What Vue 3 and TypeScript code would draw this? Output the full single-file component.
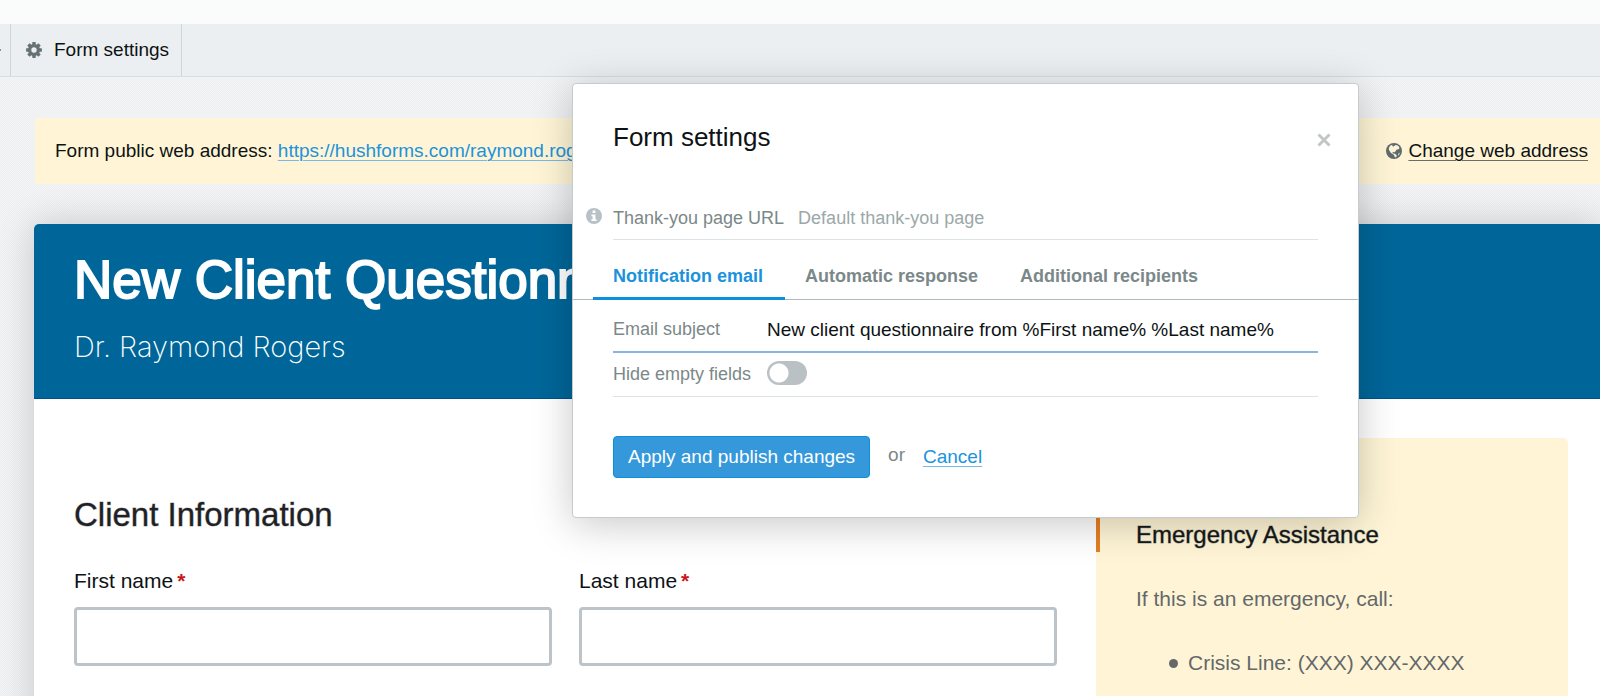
<script setup lang="ts">
import { ref } from 'vue'

interface Tab {
  id: string
  label: string
}

const tabs: Tab[] = [
  { id: 'notification', label: 'Notification email' },
  { id: 'automatic', label: 'Automatic response' },
  { id: 'recipients', label: 'Additional recipients' },
]

const activeTab = ref('notification')
const thankYouUrl = ref('')
const subject = ref('New client questionnaire from %First name% %Last name%')
const hideEmpty = ref(false)
const firstName = ref('')
const lastName = ref('')
const gearTeeth: number[] = [0, 45, 90, 135, 180, 225, 270, 315]
</script>

<template>
  <div class="page">
    <div class="top-strip"></div>
    <nav class="toolbar" aria-label="Form tools">
      <div class="toolbar-prev"><span class="dash"></span></div>
      <button type="button" class="toolbar-item">
        <svg class="gear" viewBox="0 0 16 16" aria-hidden="true">
          <circle cx="8" cy="8" r="4.4" fill="none" stroke="#667274" stroke-width="3.4" />
          <rect v-for="a in gearTeeth" :key="a" x="6.3" y="0.1" width="3.4" height="3.2" rx="0.5"
            fill="#667274" :transform="`rotate(${a} 8 8)`" />
        </svg>
        <span>Form settings</span>
      </button>
    </nav>

    <main class="content">
      <section class="banner">
        <p class="address">
          Form public web address:
          <a href="#form" class="link">https://hushforms.com/raymond.rogers</a>
        </p>
        <div class="change">
          <svg class="globe" viewBox="0 0 16 16" aria-hidden="true">
            <circle cx="8" cy="8" r="8" fill="#5f6b6e" />
            <path fill="#fff5d6" d="M3 4.4 4.4 2.6 6.4 1.8 6.2 3 7.6 3.6 9.6 2 11.6 2.4 13 3.8 13.4 5.4 12 6.6 10.6 6.6 9.6 8.2 8.2 9.4 7.2 8.8 6.4 9.4 7.2 10.4 8.8 10.8 10.6 12 10.6 13.4 9.6 14.4 8.6 13.8 8.2 12.2 6.8 11 5 10 3.6 8 2.8 6.4Z" />
            <path fill="#fff5d6" d="M12.4 10.8 13.8 9.4 13.2 11.8 12 12.6Z" />
          </svg>
          <a href="#change" class="link dark">Change web address</a>
        </div>
      </section>

      <article class="card">
        <header class="card-head">
          <h1>New Client Questionnaire</h1>
          <p>Dr. Raymond Rogers</p>
        </header>
        <div class="card-body">
          <form class="client" @submit.prevent>
            <h2>Client Information</h2>
            <div class="names">
              <div class="field">
                <label for="first">First name<span class="req">*</span></label>
                <input id="first" v-model="firstName" type="text" />
              </div>
              <div class="field">
                <label for="last">Last name<span class="req">*</span></label>
                <input id="last" v-model="lastName" type="text" />
              </div>
            </div>
          </form>
          <aside class="aside">
            <h3>Emergency Assistance</h3>
            <p>If this is an emergency, call:</p>
            <ul>
              <li>Crisis Line: (XXX) XXX-XXXX</li>
            </ul>
          </aside>
        </div>
      </article>
    </main>

    <section class="modal" role="dialog" aria-labelledby="dialog-title">
      <div class="modal-head">
        <h2 id="dialog-title">Form settings</h2>
        <button type="button" class="close" aria-label="Close">
          <svg viewBox="0 0 14 14" aria-hidden="true">
            <path d="M1.5 1.5 12.5 12.5M12.5 1.5 1.5 12.5" stroke="#c3c5c6" stroke-width="3" />
          </svg>
        </button>
      </div>

      <div class="row thanks">
        <svg class="info" viewBox="0 0 16 16" aria-hidden="true">
          <circle cx="8" cy="8" r="8" fill="#b9c1c6" />
          <path fill="#fff" d="M6.6 2.6h2.8v2.4H6.6zM5.4 6.4h4v4.8h1.2v1.8H5.4v-1.8h1.2V8.2H5.4z" />
        </svg>
        <label for="thanks">Thank-you page URL</label>
        <input id="thanks" v-model="thankYouUrl" type="text" placeholder="Default thank-you page" />
      </div>

      <div class="tabs" role="tablist">
        <button v-for="t in tabs" :key="t.id" type="button" role="tab" class="tab"
          :class="{ active: t.id === activeTab }" :aria-selected="t.id === activeTab"
          @click="activeTab = t.id">{{ t.label }}</button>
      </div>

      <div class="row subject">
        <label for="subject" class="fixed">Email subject</label>
        <input id="subject" v-model="subject" type="text" />
      </div>
      <div class="row hide">
        <label for="hide" class="fixed">Hide empty fields</label>
        <input id="hide" v-model="hideEmpty" type="checkbox" class="switch" />
      </div>

      <div class="actions">
        <button type="button" class="apply">Apply and publish changes</button>
        <span class="or">or</span>
        <a href="#cancel" class="link">Cancel</a>
      </div>
    </section>
  </div>
</template>

<style>
body {
  margin: 0;
  background: #eff1f3;
}
</style>

<style scoped>
.page {
  position: relative;
  height: 100vh;
  overflow: hidden;
  box-sizing: border-box;
  font-family: "Liberation Sans", Arial, sans-serif;
  font-size: 19px;
  color: #0d1214;
  background: repeating-conic-gradient(#edeff1 0 25%, #f2f4f5 0 50%) 0 0 / 2px 2px;
}
h1, h2, h3, p, ul {
  margin: 0;
  padding: 0;
  font-weight: 400;
}
button, input {
  font: inherit;
  color: inherit;
}
.top-strip {
  height: 24px;
  background: #fafcfc;
}
.toolbar {
  display: flex;
  height: 52px;
  background: #ebeff1;
  border-bottom: 1px solid #d9dddf;
}
.toolbar-prev {
  display: flex;
  align-items: center;
  width: 10px;
  border-right: 1px solid #cfd5d8;
}
.dash {
  width: 1px;
  height: 2px;
  background: #8b9598;
}
.toolbar-item {
  display: flex;
  align-items: center;
  gap: 12px;
  padding: 0 12px 0 15px;
  border: 0;
  border-right: 1px solid #cfd5d8;
  background: none;
}
.gear {
  width: 16px;
  height: 16px;
}
.content {
  padding: 41px 0 0 34px;
}
.banner {
  display: flex;
  align-items: center;
  justify-content: space-between;
  height: 66px;
  margin-left: 1px;
  padding: 0 12px 0 20px;
  border-radius: 4px 0 0 4px;
  background: #fff5d6;
}
.link {
  color: #1b93dc;
  text-decoration: underline;
  text-decoration-thickness: 1px;
  text-underline-offset: 3px;
  text-decoration-color: #77b9e6;
}
.link.dark {
  color: #0d1214;
  text-decoration-color: #6b6d68;
}
.change {
  display: flex;
  align-items: center;
  gap: 6px;
}
.globe {
  width: 16px;
  height: 16px;
}
.card {
  margin-top: 40px;
  border-radius: 5px 0 0 0;
  background: #fff;
  box-shadow: 0 0 36px rgba(0, 0, 0, 0.18);
}
.card-head {
  padding: 26px 40px 31px;
  border-bottom: 1px solid #00508a;
  border-radius: 5px 0 0 0;
  background: #006699;
  color: #fff;
}
.card-head h1 {
  font-size: 53px;
  line-height: 60px;
  white-space: nowrap;
  -webkit-text-stroke: 2px #fff;
}
.card-head p {
  margin-top: 17px;
  font-family: Inter, "Liberation Sans", sans-serif;
  font-weight: 200;
  font-size: 29px;
  line-height: 40px;
}
.card-body {
  display: flex;
  gap: 39px;
  height: 340px;
  padding: 39px 32px 0 40px;
}
.client {
  flex: 1;
  padding-top: 57px;
}
.client h2 {
  font-size: 33px;
  line-height: 40px;
  color: #1f2224;
  -webkit-text-stroke: 1px rgba(31, 34, 36, 0.4);
}
.names {
  display: grid;
  grid-template-columns: 1fr 1fr;
  gap: 27px;
  margin-top: 31px;
}
.field {
  display: flex;
  flex-direction: column;
  gap: 11px;
}
.field label {
  font-size: 21px;
  line-height: 30px;
}
.req {
  margin-left: 4px;
  font-weight: 700;
  color: #c8161d;
}
.field input {
  height: 59px;
  box-sizing: border-box;
  border: 3px solid #bcc4c9;
  border-radius: 4px;
  background: #fff;
}
.aside {
  width: 472px;
  padding-top: 80px;
  border-radius: 5px 5px 0 0;
  background: #fff5d6;
  color: #64686a;
  font-size: 21px;
  line-height: 32px;
}
.aside h3 {
  padding-left: 36px;
  border-left: 4px solid #e67e22;
  font-size: 24px;
  line-height: 34px;
  color: #14181a;
  -webkit-text-stroke: 1px rgba(20, 24, 26, 0.4);
}
.aside p {
  margin: 31px 0 32px 40px;
}
.aside ul {
  padding-left: 73px;
  list-style: none;
}
.aside li {
  display: flex;
  align-items: center;
  gap: 10px;
}
.aside li::before {
  content: "";
  width: 9px;
  height: 9px;
  border-radius: 50%;
  background: #64686a;
}
.modal {
  position: absolute;
  top: 83px;
  left: 572px;
  width: 787px;
  box-sizing: border-box;
  padding-bottom: 39px;
  border: 1px solid #c5cccf;
  border-radius: 4px;
  background: #fff;
  box-shadow: 0 6px 40px rgba(0, 0, 0, 0.22);
}
.modal-head {
  display: flex;
  align-items: center;
  justify-content: space-between;
  height: 34px;
  margin: 36px 27px 0 40px;
}
.modal-head h2 {
  font-size: 26px;
  line-height: 34px;
}
.close {
  display: flex;
  margin-top: 6px;
  padding: 0;
  border: 0;
  background: none;
}
.close svg {
  width: 14px;
  height: 14px;
}
.row {
  display: flex;
  align-items: center;
  box-sizing: border-box;
  height: 44px;
  margin: 0 40px;
  border-bottom: 1px solid #dde3e5;
  font-size: 18px;
  color: #7b8889;
}
.row input[type="text"] {
  flex: 1;
  height: 44px;
  padding: 0;
  border: 0;
  outline: 0;
  background: none;
  color: #0d1214;
}
.thanks {
  margin-top: 42px;
  margin-left: 13px;
  border: 0;
  background: linear-gradient(#dde3e5, #dde3e5) 27px 100% / 100% 1px no-repeat;
}
.thanks label {
  margin-right: 14px;
}
.thanks input::placeholder {
  color: #9aa8a8;
  opacity: 1;
}
.info {
  width: 16px;
  height: 16px;
  margin: 0 11px 4px 0;
}
.tabs {
  display: flex;
  height: 60px;
  box-sizing: border-box;
  padding: 0 20px;
  border-bottom: 1px solid #b0b9bb;
}
.tab {
  box-sizing: border-box;
  height: 60px;
  padding: 16px 22px 0 20px;
  border: 0;
  border-bottom: 3px solid transparent;
  background: none;
  font-size: 18px;
  font-weight: 700;
  color: #7b8889;
}
.tab.active {
  border-bottom-color: #0c8fdc;
  color: #1b93dc;
}
.fixed {
  width: 154px;
}
.subject {
  height: 53px;
  padding-top: 8px;
  border-bottom: 2px solid #8ab4e4;
}
.row.subject input {
  font-size: 19px;
}
.switch {
  appearance: none;
  width: 40px;
  height: 24px;
  margin: 0 0 4px;
  border-radius: 12px;
  background: radial-gradient(circle at 12px 12px, #fff 9px, #bac1c5 10px);
}
.switch:checked {
  background: radial-gradient(circle at 28px 12px, #fff 9px, #3498db 10px);
}
.actions {
  display: flex;
  align-items: center;
  margin: 39px 40px 0;
}
.apply {
  height: 42px;
  padding: 0 14px;
  border: 1px solid #0c8fdc;
  border-radius: 4px;
  background: #3498db;
  color: #fff;
}
.or {
  margin: 0 18px 4px;
  color: #7b8889;
}
</style>
